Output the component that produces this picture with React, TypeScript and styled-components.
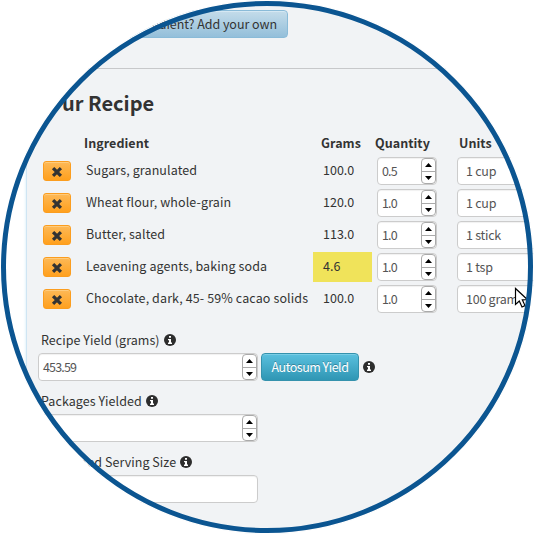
import React from "react";
import styled, { createGlobalStyle, css } from "styled-components";

const GlobalStyle = createGlobalStyle`
  * { box-sizing: border-box; }
  body {
    margin: 0;
    background: #fff;
    color: #333;
    font: 12.5px/20px "Noto Sans CJK SC", "Noto Sans", sans-serif;
    letter-spacing: 0.11px;
  }
`;

const Lens = styled.main`
  position: relative;
  width: 534px;
  height: 534px;
  overflow: hidden;
  border-radius: 50%;
  background: #fff;
`;

const Ring = styled.div`
  position: absolute;
  inset: 0.6px;
  border: 5.2px solid #0b5591;
  border-radius: 50%;
  box-shadow: 0 0 0 6px #fff;
`;

const Panel = styled.section`
  margin-left: 26px;
  width: 600px;
  height: 534px;
  padding: 10px 0 0 11px;
  background: #f1f3f5;
  border-left: 1px solid #cfe5f3;
  box-shadow: 0 0 3px #cfe9f8;
`;

const buttonBase = css`
  height: 28px;
  padding: 0;
  border-radius: 4px;
  font: inherit;
  white-space: nowrap;
`;

const AddButton = styled.button`
  ${buttonBase}
  display: block;
  width: 250px;
  padding-right: 10px;
  text-align: right;
  color: #333;
  letter-spacing: -0.05px;
  border: 1px solid #8abbd8;
  background: linear-gradient(#c4dcea, #94bfda);
  box-shadow: inset 0 1px 0 #d5e8f3;
`;

const AutosumButton = styled.button`
  ${buttonBase}
  width: 98px;
  margin: 0 4px 0 3px;
  color: #fff;
  letter-spacing: -0.5px;
  border: 1px solid #3592ad;
  background: linear-gradient(#5bc0de, #2f96b4);
  box-shadow: inset 0 1px 0 #7acde5;
  text-shadow: 0 -1px 0 rgba(0, 0, 0, 0.25);
`;

const DeleteButton = styled.button`
  display: grid;
  place-items: center;
  width: 28px;
  height: 20px;
  margin: 5px 0 0 5px;
  padding: 1px 0 0;
  border: 1px solid #fb9d1f;
  border-radius: 3px;
  background: linear-gradient(#fdb957, #ffa01e);
  box-shadow: inset 0 1px 0 #ffcb7c;
`;

const Divider = styled.div`
  height: 1px;
  margin-top: 30px;
  background: #c7c8ca;
`;

const Heading = styled.h2`
  margin: 19px 0 0 24px;
  font-size: 20px;
  line-height: 30px;
  font-weight: 700;
  letter-spacing: 0;
`;

const Columns = styled.div`
  display: grid;
  grid-template-columns: 46px 227px 2px 59px 5px 60px 20px 120px;
  white-space: nowrap;
`;

const HeaderRow = styled(Columns)`
  height: 38px;
  padding-top: 15px;
  font-weight: 700;
  letter-spacing: 0.05px;
  span:nth-child(1) { grid-column: 2; }
  span:nth-child(2) { grid-column: 4; padding-left: 8px; }
  span:nth-child(3) { grid-column: 6; margin-left: -2px; }
  span:nth-child(4) { grid-column: 8; padding-left: 2px; }
`;

const Row = styled(Columns)`
  height: 30px;
  margin-bottom: 2px;
`;

const Name = styled.div`
  grid-column: 2;
  padding: 4px 0 0 2px;
`;

const Grams = styled.div<{ $highlight?: boolean }>`
  grid-column: 4;
  padding: 4px 0 0 10px;
  letter-spacing: 0;
  background: ${(p) => (p.$highlight ? "#f0e35a" : "transparent")};
`;

const Box = styled.div<{ $width: number; $column?: number; $indent?: number }>`
  display: flex;
  justify-content: space-between;
  width: ${(p) => p.$width}px;
  height: 28px;
  margin-top: ${(p) => (p.$column ? 1 : 0)}px;
  grid-column: ${(p) => p.$column ?? "auto"};
  padding-left: ${(p) => p.$indent ?? 4}px;
  border: 1px solid #ccc;
  border-radius: 4px;
  background: #fff;
  box-shadow: inset 0 1px 1px rgba(0, 0, 0, 0.06);
  color: #555;
  line-height: 26px;
  letter-spacing: ${(p) => (p.$indent ? -0.25 : -0.85)}px;
`;

const Steps = styled.div`
  display: grid;
  grid-template-rows: 1fr 1fr;
  width: 15px;
  height: 26px;
  border: 1px solid #aaa;
  border-radius: 4px;
  background: #fff;
`;

const Step = styled.span`
  display: grid;
  place-items: center;
  & + & { border-top: 1px solid #aaa; }
`;

const Fields = styled.div`
  padding-top: 14px;
`;

const Label = styled.div`
  display: flex;
  align-items: center;
  gap: 4px;
  height: 20px;
  margin: 0 0 3px 3px;
  letter-spacing: 0.05px;
`;

const Control = styled.div`
  display: flex;
  align-items: center;
  height: 28px;
  margin-bottom: 10px;
`;

const Cursor = styled.svg`
  position: absolute;
  left: 514px;
  top: 287px;
`;

const InfoIcon = () => (
  <svg width="12" height="12" viewBox="0 0 12 12">
    <circle cx="6" cy="6" r="6" fill="#2d2d2d" />
    <path d="M5 2h2v1.7H5zM4 5h3v3.6h1V10H4V8.6h1V6.3H4z" fill="#fff" />
  </svg>
);

const CrossIcon = () => (
  <svg width="12" height="12" viewBox="0 0 12 12">
    <path d="M3.2 3.2 8.8 8.8M8.8 3.2 3.2 8.8" stroke="#333" strokeWidth="3.2" strokeLinecap="square" />
  </svg>
);

const Spinner = () => (
  <Steps>
    <Step>
      <svg width="7" height="4" viewBox="0 0 7 4"><path d="M3.5 0 7 4H0z" /></svg>
    </Step>
    <Step>
      <svg width="7" height="4" viewBox="0 0 7 4"><path d="M0 0h7L3.5 4z" /></svg>
    </Step>
  </Steps>
);

const ingredients = [
  { name: "Sugars, granulated", grams: "100.0", quantity: "0.5", unit: "1 cup" },
  { name: "Wheat flour, whole-grain", grams: "120.0", quantity: "1.0", unit: "1 cup" },
  { name: "Butter, salted", grams: "113.0", quantity: "1.0", unit: "1 stick" },
  { name: "Leavening agents, baking soda", grams: "4.6", quantity: "1.0", unit: "1 tsp", highlight: true },
  { name: "Chocolate, dark, 45- 59% cacao solids", grams: "100.0", quantity: "1.0", unit: "100 gram" },
];

export default function App() {
  return (
    <>
      <GlobalStyle />
      <Lens>
        <Panel>
          <AddButton>edient? Add your own</AddButton>
          <Divider />
          <Heading>ur Recipe</Heading>
          <HeaderRow>
            <span>Ingredient</span>
            <span>Grams</span>
            <span>Quantity</span>
            <span>Units</span>
          </HeaderRow>
          {ingredients.map((item) => (
            <Row key={item.name}>
              <DeleteButton aria-label="Remove"><CrossIcon /></DeleteButton>
              <Name>{item.name}</Name>
              <Grams $highlight={item.highlight}>{item.grams}</Grams>
              <Box $width={60} $column={6}>{item.quantity}<Spinner /></Box>
              <Box $width={120} $column={8} $indent={8}>{item.unit}</Box>
            </Row>
          ))}
          <Fields>
            <Label>Recipe Yield (grams)<InfoIcon /></Label>
            <Control>
              <Box $width={220}>453.59<Spinner /></Box>
              <AutosumButton>Autosum Yield</AutosumButton>
              <InfoIcon />
            </Control>
            <Label>Packages Yielded<InfoIcon /></Label>
            <Control><Box $width={220}><span /><Spinner /></Box></Control>
            <Label>Suggested Serving Size<InfoIcon /></Label>
            <Control><Box $width={220} /></Control>
          </Fields>
        </Panel>
        <Cursor width="14" height="22" viewBox="0 0 14 22">
          <path d="M1.5 1.5v16l3.8-3.5 2.7 6 3-1.4-2.7-5.8 5-.3z" fill="#fff" stroke="#000" strokeWidth="1.2" />
        </Cursor>
        <Ring />
      </Lens>
    </>
  );
}
